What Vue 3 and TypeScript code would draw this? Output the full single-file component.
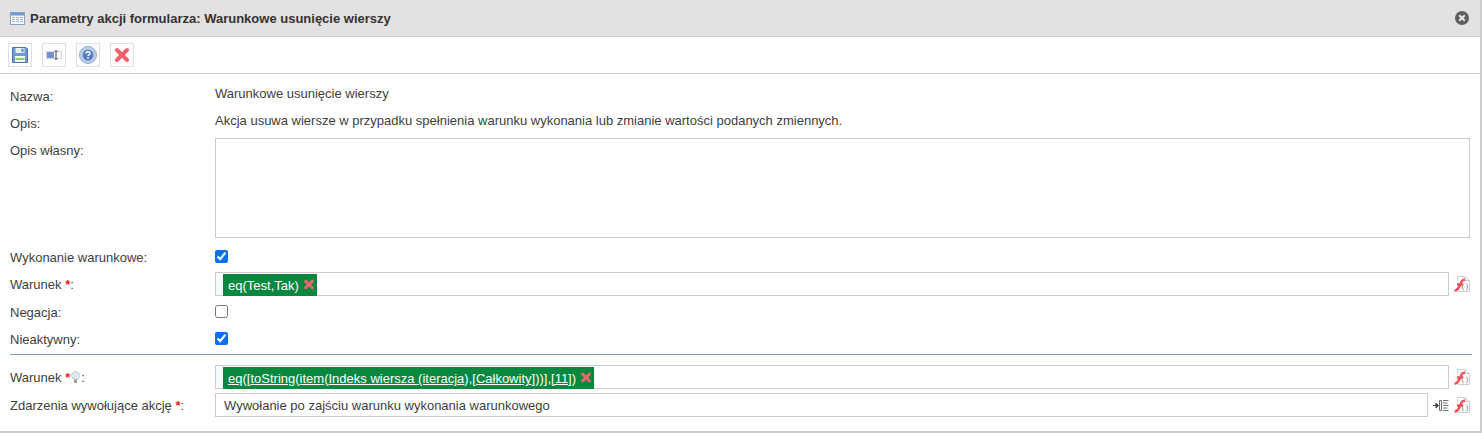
<script setup lang="ts">
const tools = ['save', 'field', 'help', 'close'] as const
</script>

<template>
  <div class="panel">
    <header class="head">
      <svg class="tbl" width="15" height="13" viewBox="0 0 15 13">
        <rect x="0.5" y="0.5" width="14" height="12" fill="#f6f8fb" stroke="#86a2c8" />
        <rect x="1" y="1" width="13" height="2.5" fill="#6f9ad8" />
        <path d="M2 5.5h3M6 5.5h3M10 5.5h3M2 7.5h3M6 7.5h3M10 7.5h3M2 9.5h3M6 9.5h3M10 9.5h3" stroke="#aeb4bd" stroke-width="1" fill="none" />
      </svg>
      <span class="title">Parametry akcji formularza: Warunkowe usunięcie wierszy</span>
      <svg class="x" width="14" height="14" viewBox="0 0 14 14">
        <circle cx="7" cy="7" r="7" fill="#5f5f61" />
        <path d="M4.2 4.2l5.6 5.6M9.8 4.2l-5.6 5.6" stroke="#e8e6e7" stroke-width="2" />
      </svg>
    </header>

    <div class="bar">
      <button v-for="t in tools" :key="t" class="tool" type="button">
        <svg v-if="t === 'save'" width="16" height="16" viewBox="0 0 16 16">
          <path d="M0.5 0.5H14L15.5 2V15.5H0.5Z" fill="#6d9ad6" stroke="#4a74ae" />
          <rect x="3.5" y="1" width="9" height="5" fill="#e6edf6" />
          <rect x="9.5" y="1.7" width="2" height="3.3" fill="#5f8ac6" />
          <rect x="3" y="9" width="10" height="6" fill="#f2f5ee" />
          <rect x="3.5" y="11" width="9" height="2" fill="#93c77c" />
        </svg>
        <svg v-else-if="t === 'field'" width="16" height="10" viewBox="0 0 16 10">
          <rect x="0.5" y="1.5" width="15" height="7" fill="#f5f6f7" stroke="#d8dade" />
          <rect x="1" y="2" width="7" height="6" fill="#6f93c9" />
          <path d="M8.5 1h3M8.5 9h3M10 1v8" stroke="#4a4a4a" stroke-width="1" fill="none" />
        </svg>
        <svg v-else-if="t === 'help'" width="18" height="18" viewBox="0 0 18 18">
          <circle cx="9" cy="9" r="8.5" fill="#bcd0ea" stroke="#8fabd2" />
          <circle cx="9" cy="9" r="5.5" fill="#567fbb" />
          <path d="M7 7.4c0-2.2 4-2.2 4 0 0 1.4-2 1.3-2 2.7" stroke="#fff" stroke-width="1.4" fill="none" />
          <rect x="8.2" y="11" width="1.6" height="1.6" fill="#fff" />
        </svg>
        <svg v-else width="16" height="16" viewBox="0 0 16 16">
          <path d="M3 3L13 13M13 3L3 13" stroke="#f4606a" stroke-width="4" stroke-linecap="round" />
        </svg>
      </button>
    </div>

    <form class="form">
      <div class="row r-text"><label class="lab">Nazwa:</label><div class="val up">Warunkowe usunięcie wierszy</div></div>
      <div class="row r-text"><label class="lab">Opis:</label><div class="val up">Akcja usuwa wiersze w przypadku spełnienia warunku wykonania lub zmianie wartości podanych zmiennych.</div></div>
      <div class="row r-own"><label class="lab">Opis własny:</label><div class="val"><textarea class="area"></textarea></div></div>
      <div class="row r-check"><label class="lab">Wykonanie warunkowe:</label><div class="val"><input class="chk" type="checkbox" checked /></div></div>
      <div class="row r-field">
        <label class="lab">Warunek <b class="req">*</b>:</label>
        <div class="val line">
          <div class="box"><span class="chip">eq(Test,Tak) <i class="del"></i></span></div>
          <svg class="fn" width="16" height="16" viewBox="0 0 16 16">
            <path d="M3.5 5V0.5H11L15.5 4.5V15.5H4" fill="#fafafa" stroke="#cfcfcf" />
            <path d="M11 0.5V4.5H15.5" fill="#eee" stroke="#cfcfcf" />
            <path d="M0.5 14.5C3 14.5 4.5 13 6 9S8 4 11 3.5M3 8.5H9" stroke="#f4505a" stroke-width="2.4" fill="none" />
            <path d="M9.5 8C8.5 8 9 10.5 8 11 9 11.5 8.5 14 9.5 14M12.5 8C13.5 8 13 10.5 14 11 13 11.5 13.5 14 12.5 14" stroke="#8d8d8d" fill="none" />
          </svg>
        </div>
      </div>
      <div class="row r-check gap"><label class="lab">Negacja:</label><div class="val"><input class="chk" type="checkbox" /></div></div>
      <div class="row r-check"><label class="lab">Nieaktywny:</label><div class="val"><input class="chk" type="checkbox" checked /></div></div>
      <hr class="sep" />
      <div class="row r-field first">
        <label class="lab">Warunek <b class="req">*</b><svg class="bulb" width="9" height="13" viewBox="0 0 9 13"><circle cx="4.5" cy="4.5" r="4" fill="#e3e8ee" stroke="#c4cbd3" /><rect x="3" y="8.5" width="3" height="3.5" fill="#9a9a9a" /></svg>:</label>
        <div class="val line">
          <div class="box">
            <span class="chip"><span><u>eq</u>([<u>toString</u>(<u>item</u>(<u>Indeks wiersza (iteracja</u>),<u>[Całkowity</u>]))],<u>[11]</u>)</span><i class="del wide"></i></span>
          </div>
          <svg class="fn" width="16" height="16" viewBox="0 0 16 16">
            <path d="M3.5 5V0.5H11L15.5 4.5V15.5H4" fill="#fafafa" stroke="#cfcfcf" />
            <path d="M11 0.5V4.5H15.5" fill="#eee" stroke="#cfcfcf" />
            <path d="M0.5 14.5C3 14.5 4.5 13 6 9S8 4 11 3.5M3 8.5H9" stroke="#f4505a" stroke-width="2.4" fill="none" />
            <path d="M9.5 8C8.5 8 9 10.5 8 11 9 11.5 8.5 14 9.5 14M12.5 8C13.5 8 13 10.5 14 11 13 11.5 13.5 14 12.5 14" stroke="#8d8d8d" fill="none" />
          </svg>
        </div>
      </div>
      <div class="row r-field last">
        <label class="lab">Zdarzenia wywołujące akcję <b class="req">*</b>:</label>
        <div class="val line">
          <div class="box text">Wywołanie po zajściu warunku wykonania warunkowego</div>
          <svg class="ind" width="16" height="13" viewBox="0 0 16 13">
            <path d="M0 6.5h3.5M3 4L5.5 6.5 3 9Z" stroke="#444" fill="#444" />
            <path d="M6.5 1.5v10h2v-10zM10 1.5h5.5M10 4h4.5M10 6.5h5.5M10 9h4.5M10 11.5h5.5" stroke="#6e6e6e" fill="none" />
          </svg>
          <svg class="fn" width="16" height="16" viewBox="0 0 16 16">
            <path d="M3.5 5V0.5H11L15.5 4.5V15.5H4" fill="#fafafa" stroke="#cfcfcf" />
            <path d="M11 0.5V4.5H15.5" fill="#eee" stroke="#cfcfcf" />
            <path d="M0.5 14.5C3 14.5 4.5 13 6 9S8 4 11 3.5M3 8.5H9" stroke="#f4505a" stroke-width="2.4" fill="none" />
            <path d="M9.5 8C8.5 8 9 10.5 8 11 9 11.5 8.5 14 9.5 14M12.5 8C13.5 8 13 10.5 14 11 13 11.5 13.5 14 12.5 14" stroke="#8d8d8d" fill="none" />
          </svg>
        </div>
      </div>
    </form>
  </div>
</template>

<style>
body { margin: 0; background: #fff; }
</style>

<style scoped>
.panel {
  box-sizing: border-box;
  width: 1482px;
  height: 433px;
  border-right: 2px solid #ccc;
  border-bottom: 2px solid #ccc;
  font-family: "Liberation Sans", Arial, sans-serif;
  font-size: 13px;
  color: #3e3e40;
}
.head {
  box-sizing: border-box;
  height: 37px;
  display: flex;
  align-items: center;
  padding: 0 10px;
  background: #e3e1e2;
  border-bottom: 1px solid #ccc;
}
.tbl { margin-right: 5px; }
.title { flex: 1; font-weight: 700; color: #333; }
.x { margin-right: 1px; }
.bar {
  box-sizing: border-box;
  height: 37px;
  display: flex;
  align-items: center;
  gap: 10px;
  padding: 0 8px;
  border-bottom: 1px solid #ccc;
}
.tool {
  box-sizing: border-box;
  width: 24px;
  height: 24px;
  padding: 0;
  display: flex;
  align-items: center;
  justify-content: center;
  background: #fff;
  border: 1px solid #e0e0e0;
}
.form { padding: 0 10px; }
.row { display: grid; grid-template-columns: 205px 1fr; }
.lab { display: block; }
.val { min-width: 0; }
.r-text { height: 12px; padding-top: 15px; line-height: 15px; }
.up { margin-top: -3px; }
.r-own { padding-top: 15px; height: 95px; margin-bottom: 7px; line-height: 15px; }
.r-own .val { margin-top: -5px; height: 100px; }
.area {
  display: block;
  box-sizing: border-box;
  width: 100%;
  height: 100px;
  margin: 0;
  border: 1px solid #ccc;
  resize: none;
  background: #fff;
}
.r-check { height: 24px; margin-top: 3px; align-items: center; }
.r-own + .r-check { margin-top: 0; }
.r-check.gap { margin-top: 4px; }
.chk { display: block; margin: -1px 0 0; width: 13px; height: 13px; accent-color: #0b6ff0; }
.r-field { min-height: 24px; align-items: center; margin-top: 3px; }
.r-field .lab { padding-top: 1px; }
.line { display: flex; align-items: center; }
.box {
  box-sizing: border-box;
  flex: 1;
  height: 24px;
  padding: 1px 7px;
  border: 1px solid #ccc;
  background: #fff;
}
.box.text { line-height: 22px; padding: 1px 8px 0; }
.chip {
  display: inline-flex;
  align-items: center;
  height: 22px;
  padding: 1px 3px 0 5px;
  box-sizing: border-box;
  background: #08873f;
  color: #fff;
  white-space: pre;
}
.del {
  position: relative;
  display: inline-block;
  width: 10px;
  height: 10px;
  margin: -2px 0 0 2px;
}
.del.wide { margin-left: 5px; }
.del::before, .del::after {
  content: "";
  position: absolute;
  left: -1px;
  top: 3.5px;
  width: 12px;
  height: 3px;
  background: #f2666c;
  transform: rotate(45deg);
}
.del::after { transform: rotate(-45deg); }
.req { color: #f01c1c; font-weight: 700; }
.fn { display: block; margin-left: 5px; flex: none; }
.ind { display: block; margin-left: 5px; flex: none; }
.bulb { margin: 0 1px; vertical-align: -2px; }
.sep {
  height: 0;
  margin: 3px -2px 10px 0;
  border: 0;
  border-top: 1px solid #7aa0c0;
}
.first { margin-top: 0; }
.last { margin-top: 4px; }
</style>
